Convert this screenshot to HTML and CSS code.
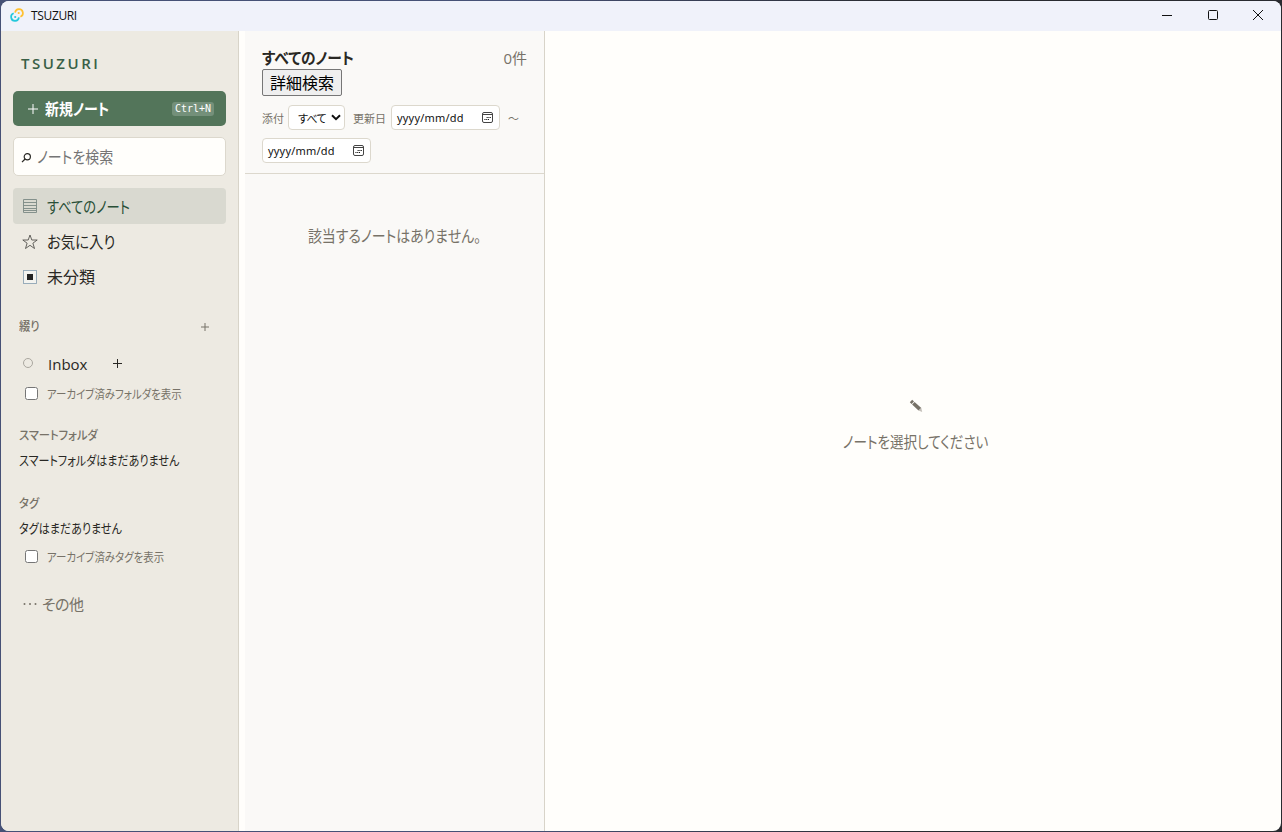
FILE: index.html
```
<!DOCTYPE html>
<html lang="ja">
    <head>
        <meta charset="UTF-8" />
        <title>TSUZURI</title>
        <link rel="stylesheet" href="styles.css">
    </head>
    <body>
        <div class="window">
            <header class="titlebar">
                <svg class="logo" viewBox="0 0 14 14" fill="none" stroke-width="1.7">
                    <path d="M5.1 4.6A3.9 3.9 0 1 1 10.4 8.7" stroke="#ffc131" />
                    <path d="M3.7 5.3A3.9 3.9 0 1 0 8.9 9.4" stroke="#24c8db" />
                    <circle cx="8.7" cy="5" r="1.1" fill="#ffc131" />
                    <circle cx="5.2" cy="9" r="1.1" fill="#24c8db" />
                </svg>
                <span class="window-title">TSUZURI</span>
                <div class="window-controls">
                    <svg viewBox="0 0 12 12"><path d="M1 6.5H11" /></svg>
                    <svg viewBox="0 0 12 12"><rect x="1.5" y="1.5" width="9" height="9" rx="1" /></svg>
                    <svg viewBox="0 0 12 12"><path d="M1 1L11 11M11 1L1 11" /></svg>
                </div>
            </header>
            <div class="app">
                <aside class="sidebar">
                    <div class="brand">TSUZURI</div>
                    <button class="new-note">
                        <svg class="plus" viewBox="0 0 12 12"><path d="M6 1V11M1 6H11" /></svg>
                        <span class="new-label">新規ノート</span>
                        <kbd>Ctrl+N</kbd>
                    </button>
                    <div class="search">
                        <svg viewBox="0 0 11 12"><circle cx="6.3" cy="5.8" r="3.1" /><path d="M4.1 8L1 11.1" /></svg>
                        <span>ノートを検索</span>
                    </div>
                    <nav>
                        <div class="nav-item active">
                            <svg viewBox="0 0 16 16"><path d="M1.5 1.5H14.5V14.5H1.5ZM1.5 4.5H14.5M1.5 7.5H14.5M1.5 10.5H14.5M1.5 12.5H14.5" /></svg>
                            <span class="nav-all">すべてのノート</span>
                        </div>
                        <div class="nav-item">
                            <svg class="star" viewBox="0 0 16 16"><path d="M8 1L9.8 6H15.2L10.9 9.2L12.5 14.5L8 11.3L3.5 14.5L5.1 9.2L0.8 6H6.2Z" /></svg>
                            <span class="nav-fav">お気に入り</span>
                        </div>
                        <div class="nav-item">
                            <svg viewBox="0 0 16 16"><rect class="box" x="1.5" y="1.5" width="13" height="13" /><rect class="dot" x="5" y="5" width="6" height="6" /></svg>
                            <span>未分類</span>
                        </div>
                    </nav>
                    <div class="section-title folders-title">
                        <span>綴り</span>
                        <svg viewBox="0 0 10 10"><path d="M5 1V9M1 5H9" /></svg>
                    </div>
                    <div class="folder">
                        <span class="circle"></span>
                        <span class="folder-name">Inbox</span>
                        <svg class="plus" viewBox="0 0 12 12"><path d="M5.5 1V10M1 5.5H10" /></svg>
                    </div>
                    <label class="check"><input type="checkbox"><span>アーカイブ済みフォルダを表示</span></label>
                    <div class="section-title smart-title"><span>スマートフォルダ</span></div>
                    <div class="empty smart-empty"><span>スマートフォルダはまだありません</span></div>
                    <div class="section-title tag-title"><span>タグ</span></div>
                    <div class="empty tag-empty"><span>タグはまだありません</span></div>
                    <label class="check tag-check"><input type="checkbox"><span>アーカイブ済みタグを表示</span></label>
                    <div class="more">
                        <svg viewBox="0 0 14 4"><circle cx="1.5" cy="2" r="1" /><circle cx="7" cy="2" r="1" /><circle cx="12.5" cy="2" r="1" /></svg>
                        <span>その他</span>
                    </div>
                </aside>
                <div class="resizer"></div>
                <section class="list">
                    <header class="list-header">
                        <div class="list-title">
                            <h2>すべてのノート</h2>
                            <span class="count">0件</span>
                        </div>
                        <button class="advanced">詳細検索</button>
                        <div class="filters">
                            <span class="filter-label">添付</span>
                            <div class="select"><span>すべて</span><svg viewBox="0 0 10 7"><path d="M1 1.2L5 5.2L9 1.2" /></svg></div>
                            <span class="filter-label updated">更新日</span>
                            <div class="date">
                                <span>yyyy/mm/dd</span>
                                <svg viewBox="0 0 11 11"><rect x="0.5" y="0.5" width="10" height="10" rx="1.5" /><path d="M1 2.5H10" /><path class="days" d="M4.6 5.5H9M2.4 7.5H7" /></svg>
                            </div>
                            <span class="tilde">～</span>
                            <div class="date">
                                <span>yyyy/mm/dd</span>
                                <svg viewBox="0 0 11 11"><rect x="0.5" y="0.5" width="10" height="10" rx="1.5" /><path d="M1 2.5H10" /><path class="days" d="M4.6 5.5H9M2.4 7.5H7" /></svg>
                            </div>
                        </div>
                    </header>
                    <p class="list-empty">該当するノートはありません。</p>
                </section>
                <main class="editor">
                    <svg class="pencil" viewBox="0 0 14 14"><path d="M0.8 3.2L3.2 0.8L5 2.4L2.6 4.9Z" /><path d="M3.1 5.4L5.6 2.9L12.3 9L9.5 11.6Z" /><path class="tip" d="M9.5 11.6L12.3 9L13.2 12.9Z" /></svg>
                    <p>ノートを選択してください</p>
                </main>
            </div>
        </div>
    </body>
</html>
```
FILE: styles.css
```
* {
    box-sizing: border-box;
}
body {
    margin: 0;
    height: 832px;
    padding: 1px;
    overflow: hidden;
    background: linear-gradient(90deg, #465176 0%, #465176 40%, #292b30 70%);
    color: #292824;
    font-family: "Open Sans", "Noto Sans CJK JP", sans-serif;
    font-size: 16px;
    font-feature-settings: "palt";
    white-space: nowrap;
}
svg {
    fill: none;
    stroke: currentColor;
    flex: none;
}
p, h2 {
    margin: 0;
}
/* condensed kana */
.new-label, .search span, .nav-all, .nav-fav, .check span, .section-title span, .empty span, h2 {
    display: inline-block;
    transform: scaleX(0.87);
    transform-origin: left;
}
.window {
    height: 830px;
    border-radius: 8px;
    overflow: hidden;
    display: flex;
    flex-direction: column;
    background: #fffefb;
}
.titlebar {
    height: 30px;
    flex: none;
    display: flex;
    align-items: center;
    padding: 0 17px 2px 9px;
    background: #f0f2fa;
    color: #111;
}
.logo {
    width: 14px;
    height: 14px;
}
.logo circle {
    stroke: none;
}
.window-title {
    margin-left: 7px;
    font-size: 12px;
    letter-spacing: -0.35px;
}
.window-controls {
    margin-left: auto;
    display: flex;
    gap: 33.5px;
}
.window-controls svg {
    width: 12px;
    height: 12px;
}
.app {
    flex: 1;
    display: flex;
    min-height: 0;
}
.sidebar {
    width: 238px;
    flex: none;
    padding: 19px 12px 0;
    background: #edeae2;
    border-right: 1px solid #d8d4c9;
}
.brand {
    height: 26px;
    margin: 0 8px;
    line-height: 26px;
    font-size: 15px;
    font-weight: 600;
    letter-spacing: 2.5px;
    color: #395f46;
}
.new-note {
    width: 213px;
    height: 35px;
    margin-top: 15px;
    padding: 0 12px 0 14px;
    display: flex;
    align-items: center;
    border: none;
    border-radius: 5px;
    background: #53755a;
    color: #fff;
    font: inherit;
    font-weight: 700;
    font-feature-settings: "palt";
}
.plus {
    width: 12px;
    height: 12px;
}
.new-label {
    margin-left: 6px;
    padding-bottom: 2px;
}
kbd {
    width: 42px;
    height: 14px;
    margin-left: auto;
    border-radius: 3px;
    background: #74907a;
    font: 10px/14px "DejaVu Sans Mono", monospace;
    text-align: center;
}
.search {
    width: 213px;
    height: 39px;
    margin-top: 11px;
    padding-left: 7px;
    display: flex;
    align-items: center;
    gap: 5px;
    border: 1px solid #dcd8cd;
    border-radius: 5px;
    background: #fffefb;
}
.search svg {
    width: 11px;
    height: 12px;
    stroke-width: 1.2;
}
.search span {
    padding-bottom: 2px;
    color: #757575;
}
nav {
    width: 213px;
    margin-top: 12px;
}
.nav-item {
    height: 35px;
    padding-left: 9px;
    display: flex;
    align-items: center;
    gap: 9px;
    border-radius: 4px;
}
.nav-item span {
    padding-bottom: 2px;
}
.nav-item svg {
    width: 16px;
    height: 16px;
    stroke: #7b8984;
    stroke-width: 0.9;
}
.nav-item .star {
    stroke: #55544f;
}
.nav-item .box {
    fill: #f3f3ef;
    stroke: #8fa5b5;
}
.nav-item .dot {
    fill: #222;
    stroke: none;
}
.active {
    height: 36px;
    background: #d9d9d0;
    color: #294f37;
}
.active .nav-all {
    padding-bottom: 0;
    transform: scaleX(0.83);
}
.nav-item .nav-fav {
    transform: scaleX(0.9);
}
.section-title {
    height: 24px;
    margin-left: 6px;
    line-height: 26px;
    font-size: 12px;
    font-weight: 500;
    color: #777268;
}
.section-title span {
    transform: scaleX(0.94);
}
.folders-title {
    width: 191px;
    margin-top: 21px;
    display: flex;
    align-items: center;
    justify-content: space-between;
}
.folders-title svg {
    width: 10px;
    height: 10px;
}
.folder {
    height: 36px;
    margin-top: 7px;
    padding-left: 10px;
    display: flex;
    align-items: center;
}
.circle {
    width: 10px;
    height: 10px;
    margin-bottom: 3px;
    border: 1px solid #aaa79f;
    border-radius: 50%;
}
.folder-name {
    width: 64px;
    margin-left: 15px;
    font-size: 15px;
}
.check {
    height: 24px;
    padding-left: 12px;
    display: flex;
    align-items: center;
    gap: 9px;
    font-size: 12px;
    color: #777268;
}
.check input {
    width: 13px;
    height: 13px;
    margin: 0 0 2px;
}
.smart-title {
    margin-top: 17px;
}
.empty {
    height: 24px;
    margin: 1px 0 0 6px;
    line-height: 24px;
    font-size: 13px;
}
.empty span {
    transform: scaleX(0.85);
}
.tag-title {
    margin-top: 19px;
}
.tag-check {
    margin-top: 5px;
}
.more {
    height: 24px;
    margin-top: 23px;
    padding-left: 10px;
    display: flex;
    align-items: center;
    gap: 5px;
    color: #777268;
    font-size: 15px;
    letter-spacing: -0.5px;
}
.more span {
    padding-bottom: 2px;
}
.more svg {
    width: 14px;
    height: 4px;
    fill: currentColor;
    stroke: none;
}
.resizer {
    width: 6px;
    flex: none;
}
.list {
    width: 300px;
    flex: none;
    background: #faf9f7;
    border-right: 1px solid #d8d4c9;
}
.list-header {
    height: 143px;
    padding: 18px 17px 0;
    border-bottom: 1px solid #dcd8cd;
}
.list-title {
    height: 20px;
    padding-bottom: 4px;
    display: flex;
    align-items: center;
    justify-content: space-between;
}
h2 {
    font-size: 16px;
    font-weight: 700;
    transform: scaleX(0.92);
}
.count {
    font-size: 15px;
    color: #777268;
}
.advanced {
    display: block;
    width: 80px;
    height: 27px;
    padding: 0 0 2px;
    border: 1px solid #767676;
    border-radius: 2px;
    background: #efefef;
    color: #000;
    font: 16px "Noto Sans CJK JP", sans-serif;
}
.filters {
    margin-top: 9px;
    display: flex;
    flex-wrap: wrap;
    align-items: center;
    row-gap: 8px;
    font-size: 11px;
}
.filter-label {
    width: 26px;
    color: #777268;
}
.updated {
    width: 38px;
    margin-left: 8px;
}
.select, .date {
    height: 25px;
    display: flex;
    align-items: center;
    justify-content: space-between;
    border: 1px solid #dcd8cd;
    border-radius: 4px;
    background: #fff;
    color: #111;
}
.select {
    width: 57px;
    padding: 0 3px 0 9px;
    letter-spacing: -0.8px;
}
.select svg {
    width: 10px;
    height: 7px;
    stroke-width: 2;
}
.date {
    width: 109px;
    padding: 0 6px 0 5px;
    font-family: "Noto Sans", sans-serif;
    letter-spacing: 0.2px;
}
.date svg {
    width: 11px;
    height: 11px;
    stroke: #444;
}
.date .days {
    stroke: #111;
    stroke-width: 1.1;
    stroke-dasharray: 1.1 0.7;
}
.tilde {
    width: 20px;
    padding-left: 8px;
    color: #777268;
}
.list-empty {
    margin-top: 50px;
    line-height: 24px;
    text-align: center;
    color: #777268;
    transform: scaleX(0.87);
}
.editor {
    flex: 1;
    padding: 368px 0 0 5px;
    display: flex;
    flex-direction: column;
    align-items: center;
    color: #777268;
}
.pencil {
    width: 14px;
    height: 14px;
    fill: #777268;
    stroke: none;
}
.pencil .tip {
    fill: #c4c0ba;
}
.editor p {
    margin-top: 17px;
    line-height: 24px;
    transform: scaleX(0.85);
}
```
